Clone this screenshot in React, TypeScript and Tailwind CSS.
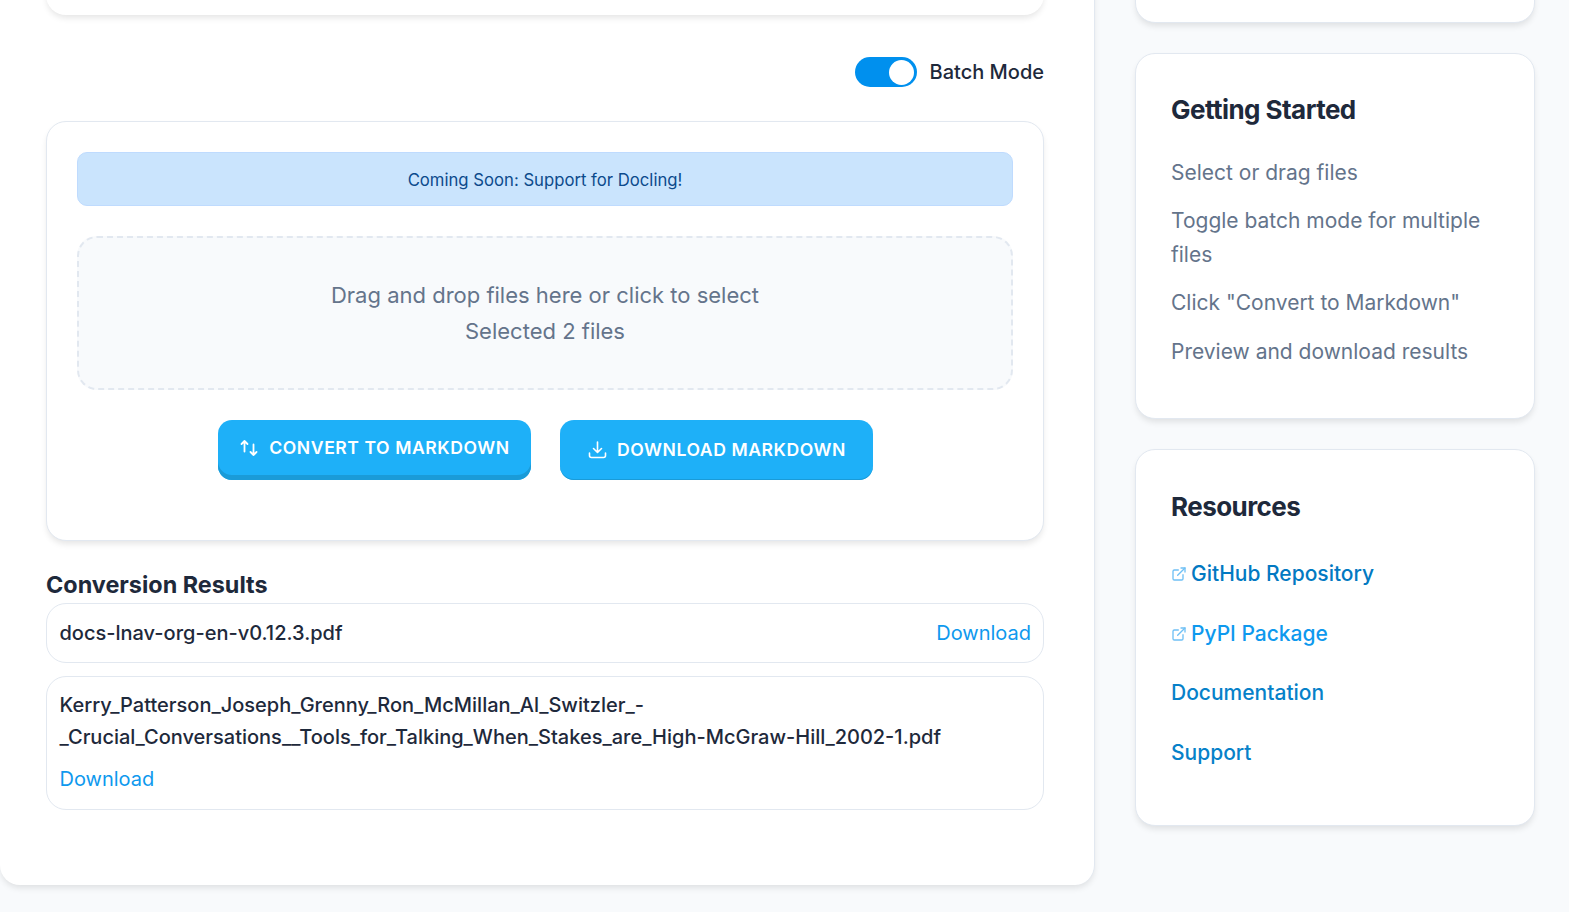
import { ExternalLink } from "lucide-react";

const font = { fontFamily: "Inter, 'Noto Sans', sans-serif" };

function SideCard({ title, children, className }: { title: string; children: React.ReactNode; className: string }) {
  return (
    <section className={`rounded-[20px] border border-[#e2e8f0] bg-white px-[35px] shadow-[0_4px_6px_-1px_rgba(0,0,0,0.1)] ${className}`}>
      <h2 className="text-[26px] leading-[32px] font-bold tracking-[-0.55px] text-[#1e293b]">{title}</h2>
      {children}
    </section>
  );
}

function ConvertIcon() {
  return (
    <svg width="18" height="18" viewBox="0 0 18 18" fill="none" stroke="currentColor" strokeWidth="1.8" strokeLinecap="round" strokeLinejoin="round">
      <path d="M4.5 12.5V2M1.5 5l3-3 3 3" />
      <path d="M13.5 5.5V16M10.5 13l3 3 3-3" />
    </svg>
  );
}

function DownloadIcon() {
  return (
    <svg width="19" height="18" viewBox="0 0 19 18" fill="none" stroke="currentColor" strokeWidth="1.6" strokeLinecap="round" strokeLinejoin="round">
      <path d="M9.5 1v10M5.5 7.5l4 4 4-4" />
      <path d="M1.5 12v2.5a2 2 0 0 0 2 2h12a2 2 0 0 0 2-2V12" />
    </svg>
  );
}

export default function App() {
  return (
    <div className="h-[912px] overflow-hidden bg-[#f8fafc]" style={font}>
      <div className="-mt-[100px] flex items-start">
        <main className="h-[985px] w-[1095px] shrink-0 rounded-[20px] border-r border-[#e2e8f0] bg-white pr-[50px] pl-[46px] shadow-[0_4px_6px_-1px_rgba(0,0,0,0.1)]">
          <div className="h-[115px] rounded-[20px] bg-white shadow-[0_4px_6px_-1px_rgba(0,0,0,0.1)]" />
          <div className="mt-[42px] flex items-center justify-end gap-[13px]">
            <div className="-mt-[1px] flex h-[30px] w-[62px] items-center justify-end rounded-full bg-[#0090ee] pr-[3px]">
              <div className="h-[25px] w-[25px] rounded-full bg-white" />
            </div>
            <span className="text-[20px] leading-[31px] font-medium text-[#1e293b]">Batch Mode</span>
          </div>
          <div className="mt-[33px] h-[420px] rounded-[20px] border border-[#e2e8f0] bg-white p-[30px] shadow-[0_4px_6px_-1px_rgba(0,0,0,0.1)]">
            <div className="flex h-[54px] items-center justify-center rounded-[10px] border border-[#bfdbfe] bg-[#cae4fd] pt-[4px] text-[16.7px] text-[#0c4a8c]">
              Coming Soon: Support for Docling!
            </div>
            <div className="mt-[30px] flex h-[154px] flex-col items-center justify-center rounded-[20px] border-2 border-dashed border-[#e2e8f0] bg-[#f8fafc] text-[22px] leading-[36px] text-[#64748b]">
              <p>Drag and drop files here or click to select</p>
              <p>Selected 2 files</p>
            </div>
            <div className="mt-[30px] flex justify-center gap-[29px]">
              <button className="flex h-[60px] w-[313px] items-center justify-center gap-[11px] rounded-[14px] bg-[#1eb0f8] pb-[4px] pl-[2px] text-[17.6px] font-semibold tracking-[0.55px] text-white uppercase shadow-[inset_0_-5px_0_#1a9bd8]">
                <ConvertIcon />
                Convert to Markdown
              </button>
              <button className="flex h-[60px] w-[313px] items-center justify-center gap-[10px] rounded-[14px] bg-[#1eb0f8] pl-[2px] text-[17.6px] font-semibold tracking-[0.55px] text-white uppercase shadow-[inset_0_-1px_0_#1a9bd8]">
                <DownloadIcon />
                Download Markdown
              </button>
            </div>
          </div>
          <h3 className="mt-[29px] text-[23.4px] leading-[30px] font-bold text-[#1e293b]">Conversion Results</h3>
          <div className="mt-[3px] flex h-[60px] items-center justify-between rounded-[20px] border border-[#e2e8f0] pr-[12px] pl-[12.5px] text-[20px]">
            <span className="font-medium text-[#1e293b]">docs-lnav-org-en-v0.12.3.pdf</span>
            <a className="text-[#0e99ee]">Download</a>
          </div>
          <div className="mt-[13px] h-[134px] rounded-[20px] border border-[#e2e8f0] pr-[12px] pl-[12.5px] pt-[12px] text-[20px] leading-[32px]">
            <div className="font-medium text-[#1e293b]">
              Kerry_Patterson_Joseph_Grenny_Ron_McMillan_Al_Switzler_-
              <br />
              _Crucial_Conversations__Tools_for_Talking_When_Stakes_are_High-McGraw-Hill_2002-1.pdf
            </div>
            <a className="mt-[10px] block text-[#0e99ee]">Download</a>
          </div>
        </main>
        <aside className="ml-[40px] w-[400px] shrink-0">
          <div className="h-[123px] rounded-[20px] border border-[#e2e8f0] bg-white shadow-[0_4px_6px_-1px_rgba(0,0,0,0.1)]" />
          <SideCard title="Getting Started" className="mt-[30px] h-[366px] pt-[40px]">
            <ul className="mt-[30px] text-[21px] leading-[34px] text-[#64748b]">
              <li>Select or drag files</li>
              <li className="mt-[14px]">Toggle batch mode for multiple files</li>
              <li className="mt-[14px]">Click "Convert to Markdown"</li>
              <li className="mt-[15px]">Preview and download results</li>
            </ul>
          </SideCard>
          <SideCard title="Resources" className="mt-[30px] h-[377px] pt-[41px]">
            <ul className="mt-[34px] text-[21px] leading-[34px] font-medium text-[#0681c9]">
              <li className="flex items-center gap-[4px] text-[#0279c2]"><ExternalLink size={16} className="text-[#6fc0f5]" />GitHub Repository</li>
              <li className="mt-[26px] flex items-center gap-[4px] text-[#0e99ee]"><ExternalLink size={16} className="text-[#6fc0f5]" />PyPI Package</li>
              <li className="mt-[25px]">Documentation</li>
              <li className="mt-[26px]">Support</li>
            </ul>
          </SideCard>
        </aside>
      </div>
    </div>
  );
}
